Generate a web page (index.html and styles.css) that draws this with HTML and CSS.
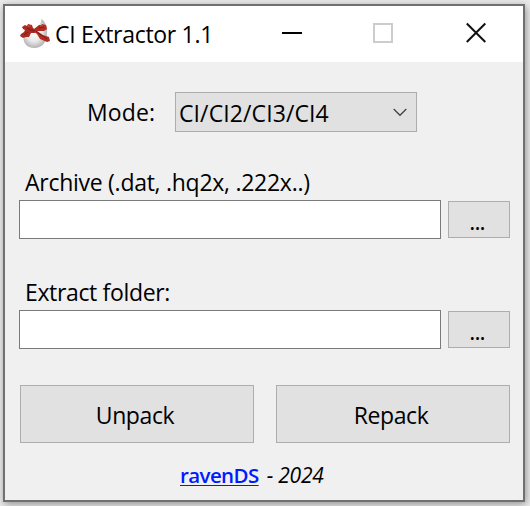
FILE: index.html
```html
<!DOCTYPE html>
<html lang="en">
<head>
<meta charset="utf-8">
<title>CI Extractor 1.1</title>
<link rel="stylesheet" href="styles.css">
</head>
<body>
<main class="window">
  <header class="titlebar">
    <svg class="app-icon" width="32" height="32" viewBox="0 0 32 32">
      <defs>
        <radialGradient id="egg" cx="45%" cy="45%" r="60%">
          <stop offset="0" stop-color="#fff"/>
          <stop offset=".55" stop-color="#e8e8e8"/>
          <stop offset="1" stop-color="#a8a8a8"/>
        </radialGradient>
      </defs>
      <path d="M22.500 1c3 2 5 6 5.500 10 1 12-4 19-13 19-6 0-10-4-10.500-9C5 17 8 13 14 11c5-2 8-5 8.500-10z" fill="url(#egg)"/>
      <path d="M3 9l3-2 2 1 1-2 4 1 1 3 3 2-1 3-4 0-2 4-3 0-3 1-3-2 1-2 3-2 1-2-2-1z" fill="#ab2a22"/>
      <path d="M15 11l5-4 2 0 1-1 4 1 1 4-3 2-7 0 6 4 6 2 1 4-3 1-7-3-3-5-4-3z" fill="#b22c22"/>
      <path d="M8 10l4 2 4 1M5 17l4-3M20 10l5-1M17 13l5 4 6 4" fill="none" stroke="#7c1d18"/>
      <path d="M9 8l3 0M21 8l3-.5" fill="none" stroke="#d8483c"/>
    </svg>
    <h1 class="title">CI Extractor 1.1</h1>
    <div class="controls">
      <svg width="204" height="24" viewBox="0 0 204 24" fill="none">
        <path d="M0 11H20" stroke="#000" stroke-width="2"/>
        <rect x="92" y="2" width="18" height="18" stroke="#ccc" stroke-width="2"/>
        <path d="M184.800 1.500l18.500 18.500M203.300 1.500l-18.500 18.500" stroke="#111" stroke-width="2"/>
      </svg>
    </div>
  </header>
  <section class="content">
    <div class="mode-row">
      <span class="mode-label">Mode:</span>
      <div class="select">
        <span class="select-text">CI/CI2/CI3/CI4</span>
        <svg width="14" height="9" viewBox="0 0 14 9"><path d="M.7 1L7 7.300 13.300 1" fill="none" stroke="#444" stroke-width="1.300"/></svg>
      </div>
    </div>
    <div class="field">
      <div class="label archive">Archive (.dat, .hq2x, .222x..)</div>
      <div class="field-row"><input class="input" type="text"><button class="browse">...</button></div>
    </div>
    <div class="field second">
      <div class="label folder">Extract folder:</div>
      <div class="field-row"><input class="input" type="text"><button class="browse">...</button></div>
    </div>
    <div class="actions">
      <button class="action unpack">Unpack</button>
      <button class="action repack">Repack</button>
    </div>
    <footer class="footer"><a class="link" href="#">ravenDS</a><em class="year">- 2024</em></footer>
  </section>
</main>
</body>
</html>
```
FILE: styles.css
```css
* { box-sizing: border-box; }
body {
  margin: 0;
  height: 506px;
  padding: 4px 5px 4px 3px;
  overflow: hidden;
  background: #ececec;
  color: #000;
  font: 23px/30px "Open Sans", "Noto Sans", sans-serif;
}
.window {
  width: 522px;
  height: 498px;
  border: 2px solid #707070;
  background: #f0f0f0;
  box-shadow: 1px 2px 8px rgba(0, 0, 0, .4);
}
.titlebar {
  height: 56px;
  display: flex;
  background: #fff;
}
.app-icon { margin: 12px 0 0 14px; }
.title {
  width: 179px;
  margin: 13px 0 0 4px;
  font: inherit;
  letter-spacing: -.3px;
  white-space: nowrap;
}
.controls { margin: 16px 0 0 48px; }
.content { padding: 30px 13px 0 14px; }
.mode-row { display: flex; height: 40px; }
.mode-label { margin: 5px 0 0 68px; width: 88px; letter-spacing: .1px; }
.select {
  width: 242px;
  height: 40px;
  display: flex;
  align-items: center;
  justify-content: space-between;
  padding: 2px 9px 0 3px;
  border: 1px solid #adadad;
  background: #e1e1e1;
}
.select svg { margin-top: -2px; }
.select-text { letter-spacing: .1px; }
.field { margin-top: 35px; }
.label { height: 33px; padding-left: 6px; letter-spacing: -.35px; white-space: nowrap; }
.archive { letter-spacing: -.27px; }
.field-row { display: flex; align-items: center; gap: 7px; }
.input {
  width: 422px;
  height: 39px;
  border: 1px solid #7a7a7a;
  background: #fff;
  padding: 0 4px;
  font: inherit;
}
button {
  margin: 0;
  border: 1px solid #adadad;
  background: #e1e1e1;
  color: #000;
  font: inherit;
}
.browse {
  width: 62px;
  height: 37px;
  padding: 2px 4px 0 0;
  letter-spacing: -.9px;
}
.second { margin-top: 38px; }
.actions { display: flex; gap: 22px; margin: 36px 0 0 1px; }
.action { width: 234px; height: 58px; padding: 2px 4px 0 0; letter-spacing: -.4px; }
.footer { display: flex; gap: 8px; margin: 17px 0 0 161px; font-size: 21px; }
.link { font-size: 20.5px; color: #0019ff; font-weight: 600; text-decoration-thickness: 1px; text-underline-offset: 2px; letter-spacing: -.6px; }
.year { letter-spacing: -.2px; }
```
